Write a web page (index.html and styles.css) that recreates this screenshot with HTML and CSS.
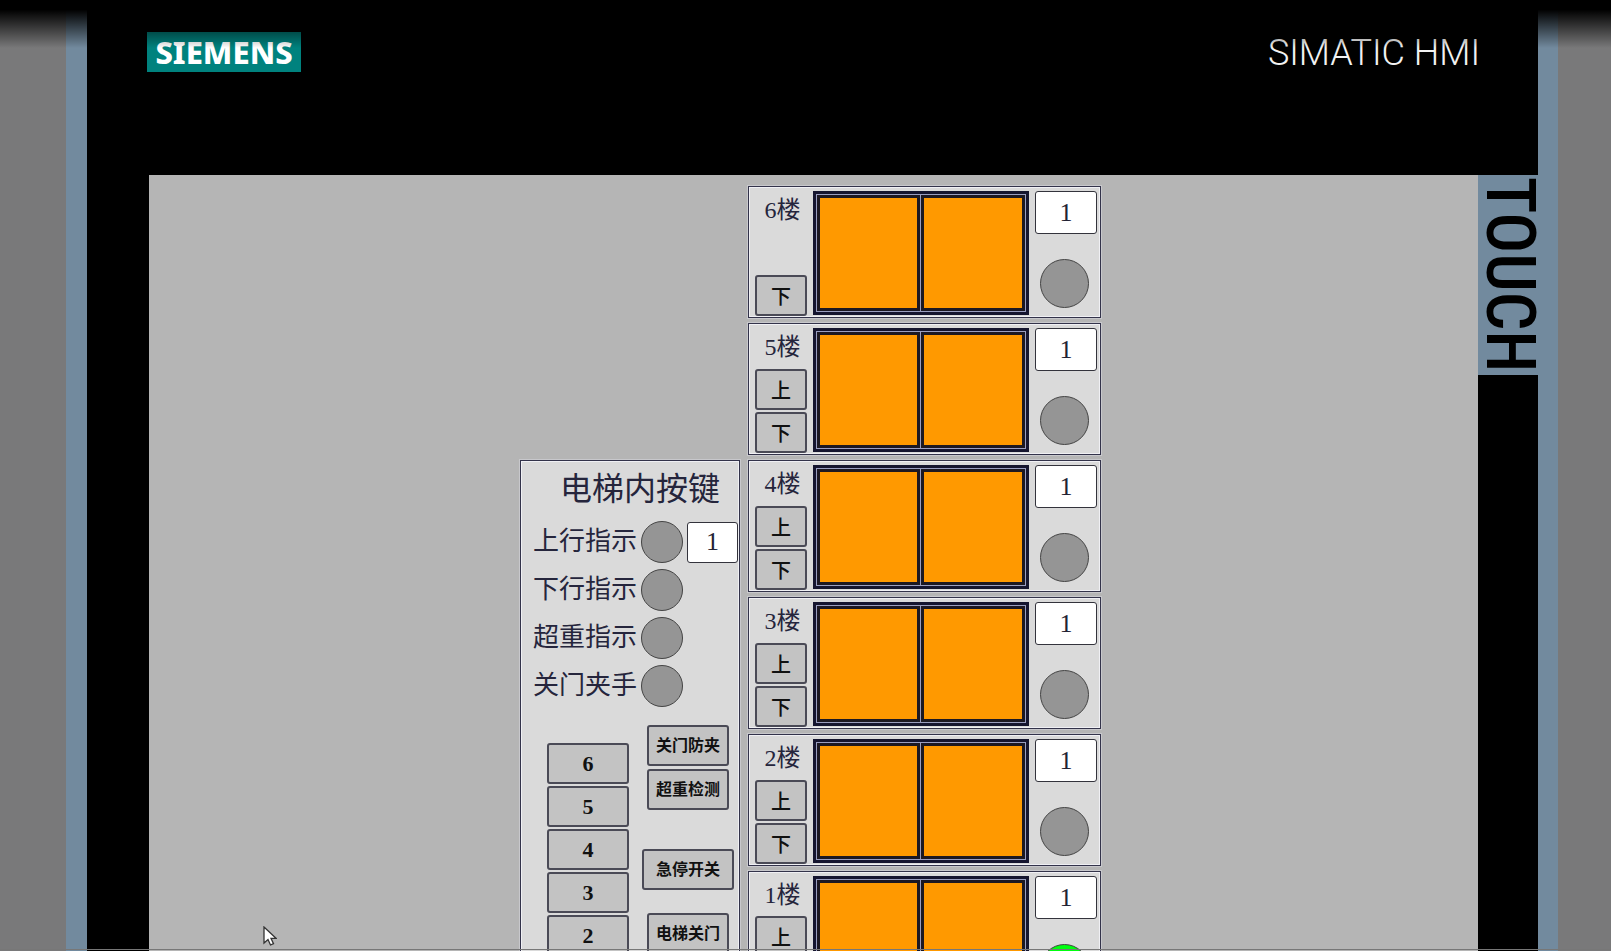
FILE: index.html
```
<!DOCTYPE html>
<html lang="zh-CN">
<head>
    <meta charset="UTF-8">
    <meta name="viewport" content="width=device-width, initial-scale=1.0">
    <title>SIMATIC HMI</title>
    <link rel="stylesheet" href="styles.css">
</head>
<body>
    <div class="device">
        <header class="top-bar">
            <div class="brand">SIEMENS</div>
            <div class="model">SIMATIC HMI</div>
        </header>

        <div class="middle">
            <main class="screen">
                <!-- buttons inside the car -->
                <section class="panel">
                    <h1>电梯内按键</h1>
                    <div class="status">
                        <label for="car-floor">上行指示</label>
                        <span class="lamp small"></span>
                        <input id="car-floor" class="display small" value="1" readonly>
                    </div>
                    <div class="status"><span>下行指示</span><span class="lamp small"></span></div>
                    <div class="status"><span>超重指示</span><span class="lamp small"></span></div>
                    <div class="status"><span>关门夹手</span><span class="lamp small"></span></div>
                    <div class="keys">
                        <div class="numbers">
                            <button>6</button>
                            <button>5</button>
                            <button>4</button>
                            <button>3</button>
                            <button>2</button>
                        </div>
                        <div class="functions">
                            <button>关门防夹</button>
                            <button>超重检测</button>
                            <button class="stop">急停开关</button>
                            <button>电梯关门</button>
                        </div>
                    </div>
                </section>

                <!-- floors -->
                <section class="floor">
                    <div class="calls">
                        <label for="floor-6">6楼</label>
                        <button>下</button>
                    </div>
                    <div class="doors"><div class="door"></div><div class="door"></div></div>
                    <div class="state">
                        <input id="floor-6" class="display" value="1" readonly>
                        <span class="lamp"></span>
                    </div>
                </section>
                <section class="floor">
                    <div class="calls">
                        <label for="floor-5">5楼</label>
                        <button>上</button>
                        <button>下</button>
                    </div>
                    <div class="doors"><div class="door"></div><div class="door"></div></div>
                    <div class="state">
                        <input id="floor-5" class="display" value="1" readonly>
                        <span class="lamp"></span>
                    </div>
                </section>
                <section class="floor">
                    <div class="calls">
                        <label for="floor-4">4楼</label>
                        <button>上</button>
                        <button>下</button>
                    </div>
                    <div class="doors"><div class="door"></div><div class="door"></div></div>
                    <div class="state">
                        <input id="floor-4" class="display" value="1" readonly>
                        <span class="lamp"></span>
                    </div>
                </section>
                <section class="floor">
                    <div class="calls">
                        <label for="floor-3">3楼</label>
                        <button>上</button>
                        <button>下</button>
                    </div>
                    <div class="doors"><div class="door"></div><div class="door"></div></div>
                    <div class="state">
                        <input id="floor-3" class="display" value="1" readonly>
                        <span class="lamp"></span>
                    </div>
                </section>
                <section class="floor">
                    <div class="calls">
                        <label for="floor-2">2楼</label>
                        <button>上</button>
                        <button>下</button>
                    </div>
                    <div class="doors"><div class="door"></div><div class="door"></div></div>
                    <div class="state">
                        <input id="floor-2" class="display" value="1" readonly>
                        <span class="lamp"></span>
                    </div>
                </section>
                <section class="floor">
                    <div class="calls first">
                        <label for="floor-1">1楼</label>
                        <button>上</button>
                    </div>
                    <div class="doors"><div class="door"></div><div class="door"></div></div>
                    <div class="state">
                        <input id="floor-1" class="display" value="1" readonly>
                        <span class="lamp on"></span>
                    </div>
                </section>
            </main>
            <aside class="side">
                <div class="touch">TOUCH</div>
            </aside>
        </div>
    </div>

    <svg class="cursor" width="14" height="21" viewBox="0 0 14 21">
        <path d="M1 1v16l4-3.500 2.500 5.500 3-1.300-2.500-5.400h5z" fill="#fff" stroke="#333" stroke-width="1.300"/>
    </svg>
</body>
</html>
```
FILE: styles.css
```
* {
    box-sizing: border-box;
}

body {
    margin: 0;
    height: 100vh;
    padding: 0 53px 0 66px;
    overflow: hidden;
    background: #79797a;
    font-family: "Liberation Serif", "Noto Sans CJK SC", serif;
    color: #25253c;
}

/* shadow along the top edge */
body::before {
    content: "";
    position: absolute;
    inset: 0 0 auto 0;
    height: 48px;
    background: linear-gradient(#000 0, #000 20%, transparent 100%);
}

/* thin line along the bottom edge */
body::after {
    content: "";
    position: absolute;
    inset: auto 0 1px 0;
    height: 1px;
    background: #777;
}

.device {
    height: 100%;
    display: flex;
    flex-direction: column;
    background: #000;
    border: solid #728a9e;
    border-width: 0 20px 0 21px;
}

.top-bar {
    height: 175px;
    flex: none;
    display: flex;
    justify-content: space-between;
    align-items: flex-start;
    padding: 32px 58px 0 60px;
}

.brand {
    width: 154px;
    line-height: 40px;
    background: #00827e;
    color: #fff;
    text-align: center;
    font-family: "Noto Sans", sans-serif;
    font-weight: 800;
    font-size: 31px;
}

.model {
    line-height: 42px;
    color: #f2f2f2;
    font-family: Roboto, sans-serif;
    font-weight: 300;
    font-size: 36px;
}

.middle {
    flex: 1;
    min-height: 0;
    display: flex;
    padding-left: 62px;
}

.screen {
    flex: 1;
    min-width: 0;
    overflow: hidden;
    display: grid;
    grid-template-columns: 220px 353px;
    grid-auto-rows: 132px;
    gap: 5px 8px;
    justify-content: center;
    padding: 11px 6px 0 0;
    background: #b5b5b5;
}

.side {
    width: 60px;
    flex: none;
}

.touch {
    width: 60px;
    height: 200px;
    background: #728a9e;
    color: #000;
    writing-mode: vertical-rl;
    line-height: 56px;
    text-align: center;
    font-family: "Roboto Condensed", "Liberation Sans Narrow", Roboto, sans-serif;
    font-weight: 500;
    font-size: 68px;
}

.panel,
.floor {
    background: #dadada;
    border: 1px solid #33334a;
    box-shadow: 0 0 0 1px #c8c8cc, inset 0 0 0 1px #f0f0f4;
}

.panel {
    grid-column: 1;
    grid-row: 3 / 7;
    padding: 5px 0 0 12px;
}

.panel h1 {
    margin: 0 0 6px;
    padding-left: 27px;
    font-size: 32px;
    line-height: 46px;
    font-weight: 400;
}

.status {
    display: flex;
    align-items: center;
    gap: 4px;
    height: 48px;
    font-size: 26px;
    line-height: 40px;
}

.lamp {
    width: 49px;
    height: 49px;
    border-radius: 50%;
    border: 1px solid #444;
    background: #959595;
}

.state .lamp {
    margin-right: 4px;
}

.lamp.small {
    width: 42px;
    height: 42px;
}

.lamp.on {
    background: #00ff10;
}

.display {
    width: 62px;
    height: 43px;
    padding: 0;
    border: 1px solid #33333c;
    border-radius: 3px;
    outline: 0;
    background: #fff;
    color: #222233;
    text-align: center;
    font-family: inherit;
    font-size: 26px;
}

.display.small {
    width: 51px;
    height: 41px;
}

button {
    height: 41px;
    padding: 0;
    border: 2px solid #4a4a56;
    border-radius: 3px;
    background: #c3c3c3;
    color: #111;
    font-family: inherit;
    font-weight: 700;
}

.keys {
    display: flex;
    align-items: flex-start;
    padding: 15px 3px 0 14px;
    gap: 13px;
}

.numbers {
    display: grid;
    gap: 2px;
    width: 82px;
    margin-top: 18px;
}

.numbers button {
    font-size: 22px;
}

.functions {
    display: flex;
    flex-direction: column;
    align-items: center;
    gap: 3px;
    width: 92px;
}

.functions button {
    width: 82px;
    padding-bottom: 3px;
    font-size: 16px;
}

.functions .stop {
    width: 92px;
    margin: 36px 0 20px;
}

.floor {
    grid-column: 2;
    display: flex;
    align-items: flex-start;
    gap: 6px;
    padding: 4px 3px 0 6px;
}

.calls {
    width: 52px;
    height: 125px;
    display: flex;
    flex-direction: column;
    gap: 2px;
}

.calls label {
    flex: 1;
    padding-left: 3px;
    text-align: center;
    line-height: 38px;
    font-size: 24px;
}

.calls.first label {
    flex: 0 0 37px;
}

.calls button {
    font-size: 20px;
    font-weight: 500;
}

.doors {
    width: 217px;
    height: 124px;
    display: flex;
    gap: 1px;
    padding: 1px;
    border: 3px solid #15152f;
    background: #9a9ec0;
}

.door {
    flex: 1;
    border: 3px solid #1c1822;
    background: #ff9900;
}

.state {
    display: flex;
    flex-direction: column;
    align-items: center;
    gap: 25px;
}

.cursor {
    position: absolute;
    left: 263px;
    top: 926px;
}
```
